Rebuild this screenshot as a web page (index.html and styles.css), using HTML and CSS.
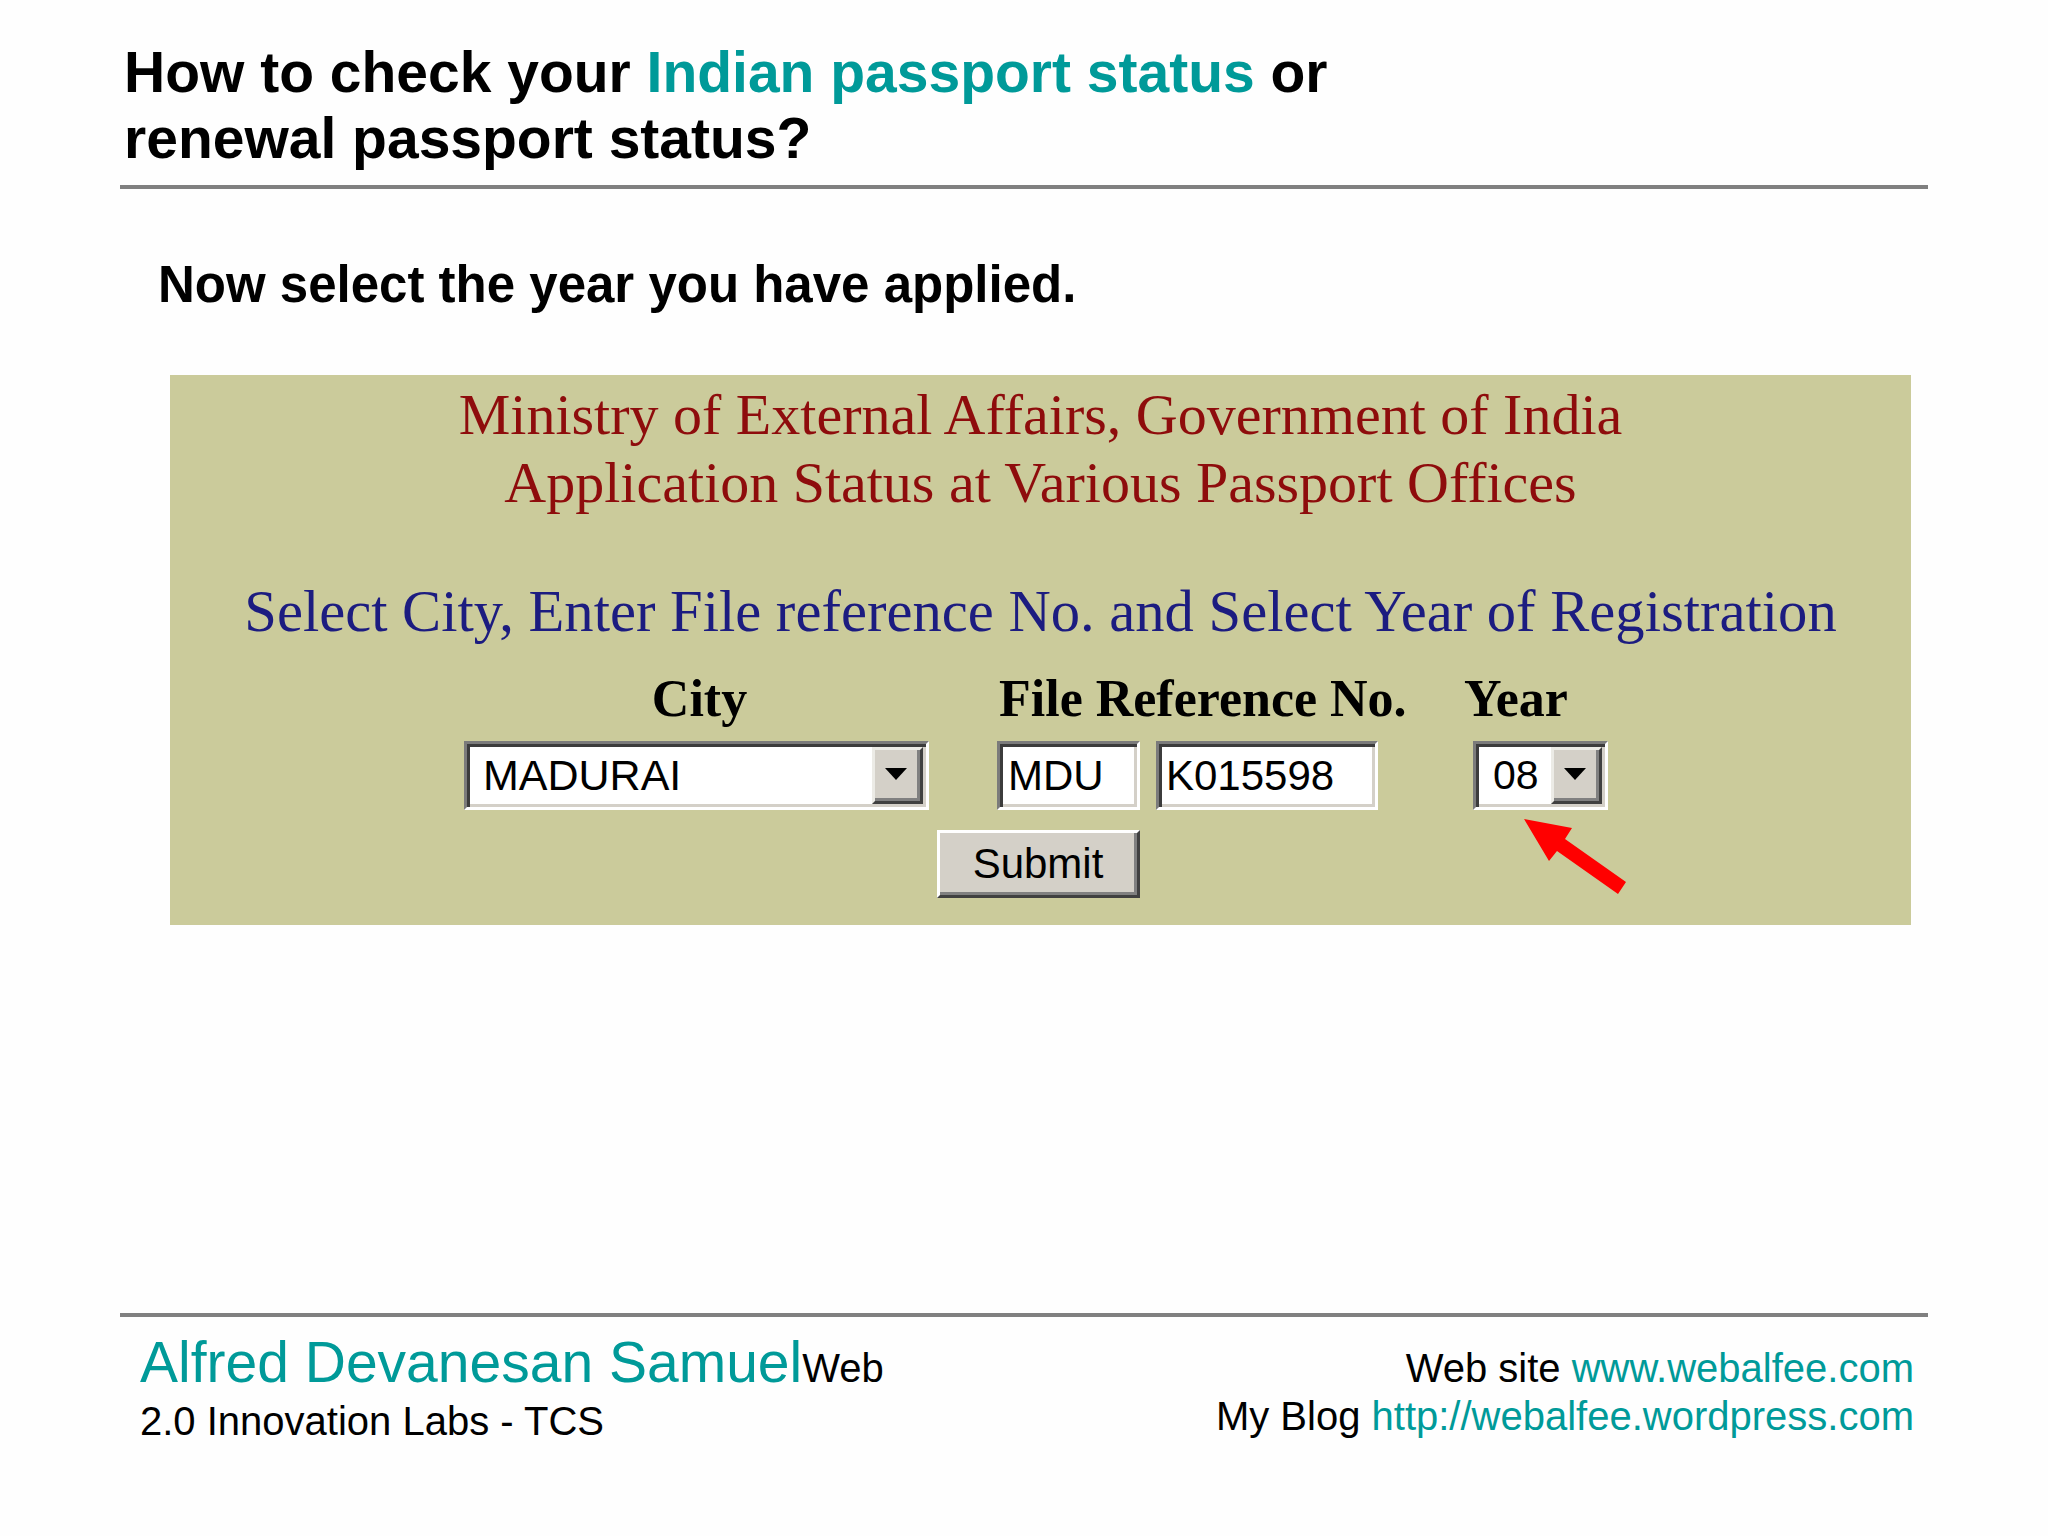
FILE: index.html
```html
<!DOCTYPE html>
<html lang="en">
<head>
<meta charset="utf-8">
<title>How to check your Indian passport status</title>
<link rel="stylesheet" href="styles.css">
</head>
<body>
<div class="slide">
  <h1 class="title">How to check your <span class="teal">Indian passport status</span> or<br>renewal passport status?</h1>
  <div class="rule"></div>
  <h2 class="sub">Now select the year you have applied.</h2>

  <section class="panel">
    <p class="org">Ministry of External Affairs, Government of India<br>Application Status at Various Passport Offices</p>
    <p class="instruction">Select City, Enter File reference No. and Select Year of Registration</p>
    <div class="form">
      <div class="label label-city">City</div>
      <div class="label label-ref">File Reference No.</div>
      <div class="label label-year">Year</div>

      <div class="field select select-city">
        <span class="value value-city">MADURAI</span>
        <span class="drop"><span class="tri"></span></span>
      </div>
      <div class="ref-group">
        <div class="field text text-mdu"><span class="value">MDU</span></div>
        <div class="field text text-num"><span class="value">K015598</span></div>
      </div>
      <div class="field select select-year">
        <span class="value value-year">08</span>
        <span class="drop"><span class="tri"></span></span>
      </div>
    </div>
    <div class="submit">Submit</div>
    <svg class="arrow" width="140" height="100" viewBox="0 0 140 100" aria-hidden="true">
      <polygon points="24,14 72,23 65,34 126,77 118,89 57,46 49,56" fill="#ff0000"/>
    </svg>
  </section>

  <div class="rule rule-foot"></div>
  <footer class="foot">
    <div class="foot-left">
      <div class="name-line"><span class="name">Alfred Devanesan Samuel</span><span class="small">Web</span></div>
      <div class="lab-line">2.0 Innovation Labs - TCS</div>
    </div>
    <div class="foot-right">
      <div>Web site <span class="teal-link">www.webalfee.com</span></div>
      <div>My Blog <span class="teal-link">http://webalfee.wordpress.com</span></div>
    </div>
  </footer>
</div>
</body>
</html>
```

FILE: styles.css
```css
html, body {
  margin: 0;
  padding: 0;
  background: #fefefe;
}

.slide {
  width: 2048px;
  height: 1536px;
  box-sizing: border-box;
  background: #fefefe;
  font-family: "Liberation Sans", Arial, sans-serif;
  color: #000;
  overflow: hidden;
}

.title {
  margin: 0;
  padding: 39px 0 0 124px;
  font-size: 57px;
  line-height: 66px;
  font-weight: bold;
}

.teal { color: #009a99; }

.rule {
  margin: 14px 0 0 120px;
  width: 1808px;
  height: 4px;
  background: #808080;
}

.sub {
  margin: 66px 0 0 158px;
  font-size: 51px;
  line-height: 60px;
  font-weight: bold;
}

.panel {
  position: relative;
  margin: 60px 0 0 170px;
  width: 1741px;
  height: 550px;
  box-sizing: border-box;
  padding-top: 6px;
  background: #cbcb9b;
  display: flex;
  flex-direction: column;
  align-items: center;
  font-family: "Liberation Serif", "Times New Roman", serif;
}

.org {
  margin: 0;
  font-size: 58px;
  line-height: 68px;
  color: #8e0c0c;
  text-align: center;
}

.instruction {
  margin: 61px 0 0 0;
  font-size: 58.6px;
  line-height: 68px;
  color: #1c1c80;
  text-align: center;
}

.form {
  margin: 23px 0 0 294px;
  align-self: flex-start;
  display: grid;
  grid-template-columns: 465px 479px 200px;
  row-gap: 12px;
}
.form .label-ref, .form .ref-group { margin-left: 68px; }
.form .label-year { margin-left: 56px; }

.label {
  font-size: 52px;
  line-height: 60px;
  font-weight: bold;
  color: #000;
  white-space: nowrap;
}
.label-city { text-align: center; padding-left: 6px; }
.label-ref { padding-left: 2px; }

.field {
  box-sizing: border-box;
  height: 69px;
  background: #fff;
  border-style: solid;
  border-width: 3px;
  border-color: #7b7b7b #fff #fff #7b7b7b;
  box-shadow: inset 3px 3px 0 #3c3c3c, inset -3px -3px 0 #d4d0c8;
  display: flex;
  align-items: center;
  font-family: "Liberation Sans", Arial, sans-serif;
  font-size: 42px;
  color: #000;
}

.select-city { width: 465px; padding-left: 16px; }
.form .select-year { width: 135px; padding-left: 17px; margin-left: 65px; }

.value { flex: 1; white-space: nowrap; }
.value-city { font-size: 43px; }
.value-year { font-size: 41px; }

.drop {
  box-sizing: border-box;
  width: 51px;
  height: 57px;
  margin-right: 3px;
  background: #d4d0c8;
  border-style: solid;
  border-width: 3px;
  border-color: #ecebe6 #404040 #404040 #ecebe6;
  box-shadow: inset -3px -3px 0 #808080;
  display: flex;
  align-items: center;
  justify-content: center;
}

.tri {
  width: 0;
  height: 0;
  border-left: 11px solid transparent;
  border-right: 11px solid transparent;
  border-top: 12px solid #000;
  margin-left: -3px;
  margin-top: -3px;
}

.ref-group {
  display: flex;
  gap: 16px;
}
.text-mdu { width: 143px; padding-left: 8px; }
.text-num { width: 222px; padding-left: 7px; }

.submit {
  margin-top: 20px;
  margin-left: -5px;
  box-sizing: border-box;
  width: 203px;
  height: 68px;
  background: #d4d0c8;
  border-style: solid;
  border-width: 3px;
  border-color: #fff #404040 #404040 #fff;
  box-shadow: inset -3px -3px 0 #808080;
  display: flex;
  align-items: center;
  justify-content: center;
  font-family: "Liberation Sans", Arial, sans-serif;
  font-size: 42px;
  color: #000;
}

.arrow {
  position: absolute;
  left: 1330px;
  top: 430px;
}

.rule-foot {
  margin-top: 388px;
}

.foot {
  display: flex;
  justify-content: space-between;
  padding: 13px 134px 0 140px;
}

.name-line {
  font-size: 57px;
  line-height: 64px;
  white-space: nowrap;
}
.name { color: #009a99; }
.small { font-size: 40px; color: #000; }

.lab-line {
  margin-top: -5px;
  font-size: 40px;
  line-height: 52px;
}

.foot-right {
  margin-top: 14px;
  text-align: right;
  font-size: 40px;
  line-height: 48px;
}
.teal-link { color: #009a99; }
```
